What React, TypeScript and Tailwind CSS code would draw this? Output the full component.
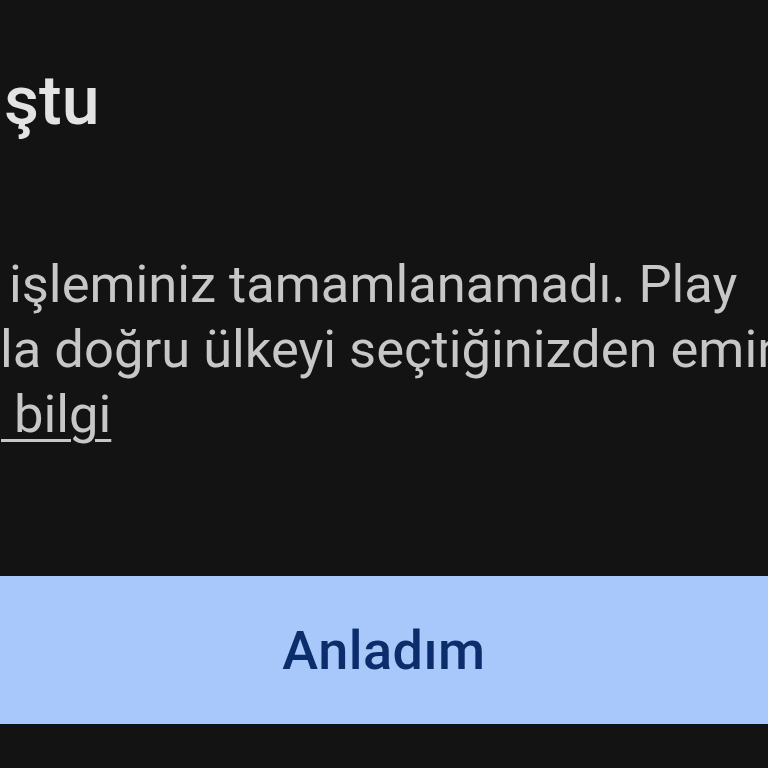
import React from 'react';

const font = { fontFamily: 'Roboto, "Noto Sans", sans-serif' };

// a line whose start is cut off by the left edge of the screen
const Line = ({ hidden, shown, pad, link }: { hidden: string; shown: string; pad: string; link?: boolean }) => (
  <div className="flex whitespace-nowrap">
    <div className="flex w-0 shrink-0 justify-end">
      <span className={link ? 'underline decoration-[3px] underline-offset-[7px]' : ''}>{hidden}</span>
    </div>
    <span className={`${pad} ${link ? 'underline decoration-[3px] underline-offset-[7px]' : ''}`}>{shown}</span>
  </div>
);

const App = () => {
  return (
    <div className="w-[768px] h-[768px] overflow-hidden bg-[#131313] flex flex-col" style={font}>
      <div className="pt-[61px] flex whitespace-nowrap text-[68px] leading-[80px] font-medium text-[#e3e3e3]">
        <div className="flex w-0 shrink-0 justify-end">
          <span className="mr-[8px]">Ödeme sorunu olu</span>
        </div>
        <span className="pl-[4px]">ştu</span>
      </div>

      <div className="mt-[111px] text-[52.5px] leading-[65px] text-[#c7c7c7]">
        <Line hidden="Satın alma " shown="işleminiz tamamlanamadı. Play" pad="pl-[9px]" />
        <Line hidden="Store ayarlarınız" shown="la doğru ülkeyi seçtiğinizden emin olun." pad="" />
        <Line hidden="Daha fazla" shown={'\u00a0bilgi'} pad="pl-[1px]" link />
      </div>

      <div className="mt-[129px] h-[148px] w-full shrink-0 bg-[#a8c7fa] flex items-center justify-center">
        <span className="text-[54px] font-medium text-[#0b2d6b] tracking-[0.5px]">Anladım</span>
      </div>
    </div>
  );
};

export default App;
